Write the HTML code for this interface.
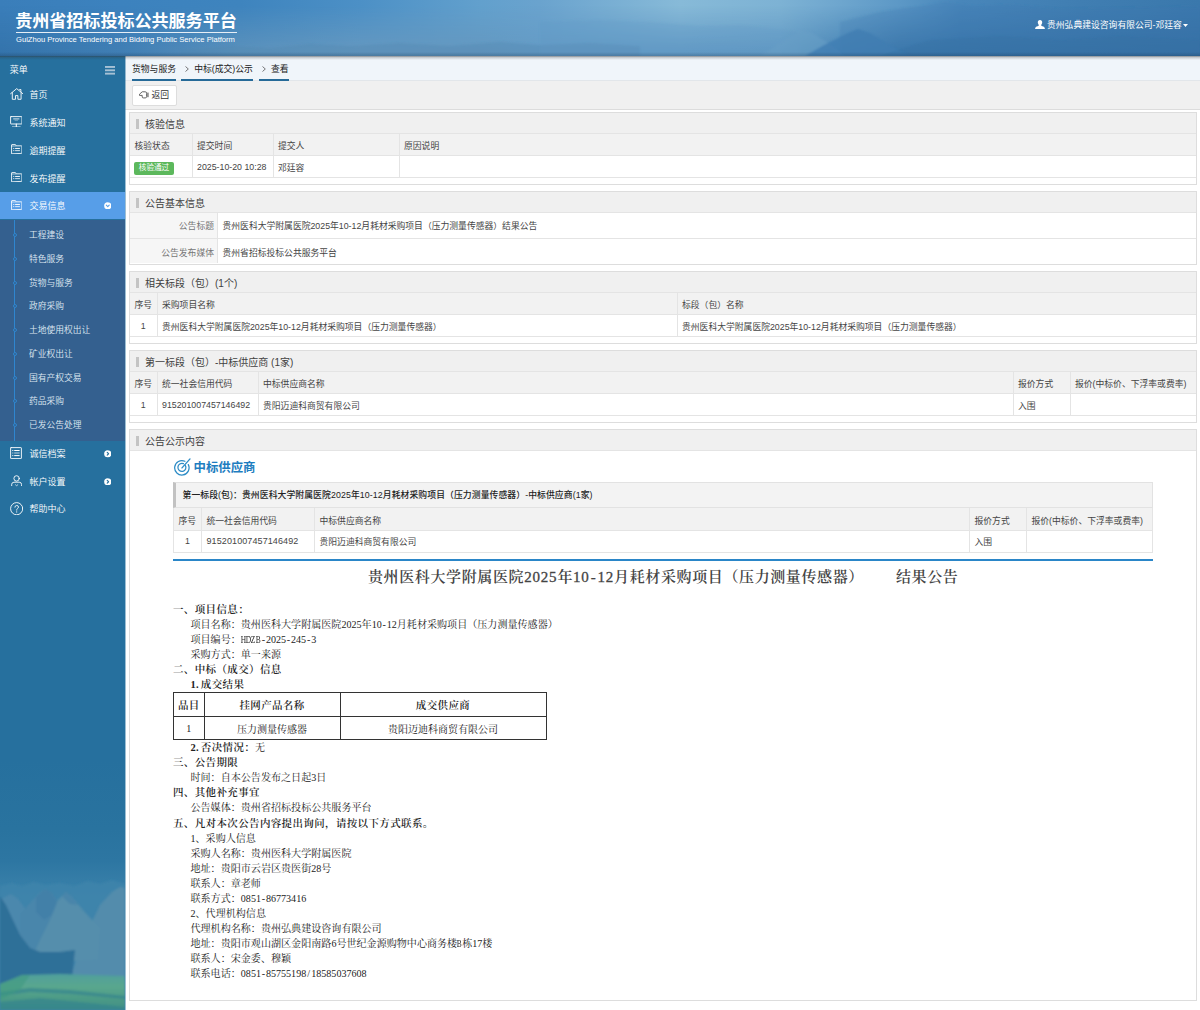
<!DOCTYPE html>
<html lang="zh-CN">
<head>
<meta charset="utf-8">
<title>贵州省招标投标公共服务平台</title>
<style>
*{box-sizing:border-box;margin:0;padding:0}
html,body{width:1200px;height:1010px;overflow:hidden;background:#fff}
body{font-family:"Liberation Sans","Noto Sans CJK SC",sans-serif;font-size:9px;color:#333;position:relative}
.abs{position:absolute}
/* header */
#hdr{position:absolute;left:0;top:0;width:1200px;height:56px;overflow:hidden;background:#4585bb}
#hdr svg.bg{position:absolute;left:0;top:0}
#hdr .t1{position:absolute;left:15.2px;top:10px;font-size:17.1px;font-weight:bold;color:#fff;letter-spacing:-0.05px;white-space:nowrap;line-height:24px}
#hdr .ul{position:absolute;left:15.5px;top:32px;width:221px;height:1px;background:#e6eef6}
#hdr .t2{position:absolute;left:16px;top:34.5px;font-size:7.6px;color:#fff;white-space:nowrap;line-height:10px}
#hdr .user{position:absolute;left:1047px;top:19px;font-size:8.8px;color:#fff;white-space:nowrap;line-height:12px}
#hshadow{position:absolute;left:0;top:56px;width:1200px;height:4px;background:linear-gradient(180deg,rgba(50,55,60,.55),rgba(50,55,60,.2) 40%,rgba(50,55,60,0));z-index:5}
#sedge{position:absolute;left:125px;top:56px;width:1px;height:954px;background:rgba(38,112,158,.45);z-index:4}
/* sidebar */
#side{position:absolute;left:0;top:56px;width:125px;height:954px;background:#26709e;overflow:hidden;color:#fff}
#side .bgimg{position:absolute;left:0;top:0}
#side .row{position:absolute;left:0;width:125px;height:27.5px;line-height:27.5px;font-size:9px;white-space:nowrap}
#side .row span.tx{position:absolute;left:29.5px}
#side .row svg{position:absolute;left:9px;top:7px}
#side .sub{position:absolute;left:0;top:163px;width:125px;height:221px;background:#34608f}
#side .sub .ln{position:absolute;left:14px;top:0;width:1px;height:221px;background:#2f86cf}
#side .sub .it{position:absolute;left:29px;font-weight:350;font-size:8.75px;line-height:12px;color:#dfe8f2;white-space:nowrap}
#side .sub .dot{position:absolute;left:12.5px;width:4px;height:4px;border:1px solid #2f86cf;border-radius:50%;background:#34608f}
/* main */
#main{position:absolute;left:125px;top:56px;width:1075px;height:954px;background:#fff}
#crumb{position:absolute;left:0;top:0;width:1075px;height:25px;background:#f0f5fa;border-bottom:1px solid #e2e6ea}
#crumb .c{position:absolute;top:2px;height:23px;line-height:22px;font-size:8.8px;color:#222;border-bottom:2px solid #266a98;white-space:nowrap;padding:0}
#crumb .s{position:absolute;top:1px;line-height:22px;font-size:9px;color:#333}
#tool{position:absolute;left:0;top:25px;width:1075px;height:29px;background:#f0f0f0;border-bottom:1px solid #dcdcdc}
#tool .btn{position:absolute;left:7px;top:4px;width:44.5px;height:20.5px;background:#fff;border:1px solid #ddd;border-radius:2px;font-size:8.8px;line-height:18.5px;color:#333}
.panel{position:absolute;left:4px;width:1068px;border:1px solid #ddd;background:#fff}
.panel .hd{height:21px;background:#f0f0f0;border-bottom:1px solid #e4e4e4;position:relative;font-size:10px;line-height:23px;color:#404040;padding-left:15px;overflow:hidden}
.panel .hd:before{content:"";position:absolute;left:6px;top:5.5px;width:3px;height:10px;background:#c4c4c4}
table{border-collapse:collapse;table-layout:fixed}
.tb{width:100%;font-size:9px}
.tb th{background:#f2f2f2;font-weight:normal;text-align:left;color:#444;height:21px;padding:2px 4.5px 0;border:1px solid #e4e4e4;white-space:nowrap}
.tb td{height:22px;padding:2px 4.5px 0;border:1px solid #e4e4e4;white-space:nowrap;color:#444}
.tb tr>*:first-child{border-left:none}
.tb tr>*:last-child{border-right:none}
.tb tr:first-child>*{border-top:none}

#crumb .c svg.gt{position:absolute;top:7.7px}
.tb{font-size:8.8px}
.tb td.ct{text-align:center;padding:2px 0 0}
.tb.kv th{text-align:right;background:#f6f6f6;color:#777;height:25px;padding:1px 2.5px 0 0}
.tb.kv td{height:25px;padding:1px 5px 0}
.tb.kv tr:last-child th{padding-top:3px}.tb.kv tr:last-child td{padding-top:3px}
.tb.kv tr:last-child>*{border-bottom:none}
.badge{display:inline-block;background:#5cb85c;color:#fff;font-size:7.6px;line-height:12.5px;height:12.5px;width:40px;text-align:center;border-radius:2px;vertical-align:middle;position:relative;top:1.5px;left:-0.5px}

#side svg.ic{position:absolute}
#side .act{position:absolute;left:0;width:125px;height:27.7px;background:#579ee8}
#side .row{height:27.75px;line-height:27.75px;font-weight:350}
#side .sub{top:163.5px;height:221px}

#p5 .h2{position:absolute;font-size:12.4px;font-weight:bold;color:#1e7dc0;line-height:18px;white-space:nowrap}
#p5 .sh{position:absolute;height:26px;line-height:24px;background:#f3f3f3;border:1px solid #e2e2e2;border-left:3px solid #c2c2c2;padding-left:6.5px;font-size:8.8px;color:#222;font-weight:500;white-space:nowrap;letter-spacing:0.1px}
#p5 .t2{font-family:"Liberation Sans","Noto Sans CJK SC",sans-serif}
#p5 .t2 th{height:22px;padding-top:3px}#p5 .t2 td{height:22px;padding-top:0}
#p5 .t2 tr>*:first-child{border-left:1px solid #e4e4e4}
#p5 .t2 tr>*:last-child{border-right:1px solid #e4e4e4}
#p5 .t2 .dg{letter-spacing:0.1px;font-size:9px}
#p5 .bl{position:absolute;height:2px;background:#2a86c8}
.ann{position:absolute;left:-1px;top:0;font-family:"Liberation Serif","Noto Serif CJK SC",serif;color:#222;font-weight:400}
.ann .ttl{position:absolute;font-size:15px;font-weight:600;letter-spacing:0.62px;white-space:nowrap;line-height:22px;color:#444}
.ann .l{position:absolute;left:44px;font-size:10.07px;line-height:15px;white-space:nowrap}
.ann .l.i{left:61.5px}
.ann .l.b,.ann .l b{font-size:10.5px;font-weight:600;color:#222;letter-spacing:0.36px}
.ann .m{font-family:"Liberation Serif",serif;font-size:10.07px}
.ann .m i{font-style:normal;display:inline-block;width:5.03px;text-align:center}
.ann .m i.c{transform:scaleX(.74);transform-origin:50% 50%;text-indent:-1.1px}
.ann .rt{position:absolute;border-collapse:collapse;table-layout:fixed;width:372.5px}
.ann .rt th,.ann .rt td{border:1px solid #333;height:23.7px;text-align:center;font-size:10px;padding:0;color:#222;font-weight:400}
.ann .rt th{font-size:10.5px;font-weight:600;color:#222;letter-spacing:0.36px}
.ann .ttl .n{font-weight:normal;-webkit-text-stroke:0.3px #444;letter-spacing:0.8px}
.ann .ttl .hy{font-style:normal;display:inline-block;width:7.8px;text-align:center}
</style>
</head>
<body>
<div id="hdr">
  <svg class="bg" width="1200" height="56" viewBox="0 0 1200 56" preserveAspectRatio="none">
    <defs>
      <linearGradient id="hg" x1="0" y1="0" x2="1" y2="0"><stop offset="0.0000" stop-color="#3a7eba"/><stop offset="0.1000" stop-color="#3c82be"/><stop offset="0.2000" stop-color="#3e84be"/><stop offset="0.3000" stop-color="#4c90c6"/><stop offset="0.4000" stop-color="#62a0cd"/><stop offset="0.4500" stop-color="#6aa3ce"/><stop offset="0.5667" stop-color="#87bad8"/><stop offset="0.6500" stop-color="#7db2d4"/><stop offset="0.7000" stop-color="#6ea6ce"/><stop offset="0.7500" stop-color="#5c98c6"/><stop offset="0.8000" stop-color="#4886ba"/><stop offset="0.9000" stop-color="#407eb2"/><stop offset="1.0000" stop-color="#3a78ac"/></linearGradient>
      <linearGradient id="hb" x1="0" y1="0" x2="1" y2="0"><stop offset="0.0000" stop-color="#3474ac"/><stop offset="0.1000" stop-color="#407eb4"/><stop offset="0.2000" stop-color="#5a91bc"/><stop offset="0.3000" stop-color="#6498c0"/><stop offset="0.4000" stop-color="#6498c0"/><stop offset="0.4500" stop-color="#649bc5"/><stop offset="0.5667" stop-color="#649bc5"/><stop offset="0.6500" stop-color="#6299c3"/><stop offset="0.7000" stop-color="#4b87b6"/><stop offset="0.7500" stop-color="#3c78aa"/><stop offset="0.8000" stop-color="#3874a8"/><stop offset="1.0000" stop-color="#346ea2"/></linearGradient>
      <linearGradient id="vm" x1="0" y1="0" x2="0" y2="1"><stop offset="0.1" stop-color="#000"/><stop offset="0.9" stop-color="#fff"/></linearGradient>
      <mask id="mk"><rect width="1200" height="56" fill="url(#vm)"/></mask>
      <filter id="bl" x="-5%" y="-30%" width="110%" height="160%"><feGaussianBlur stdDeviation="1.2"/></filter>
    </defs>
    <rect width="1200" height="56" fill="url(#hg)"/>
    <rect width="1200" height="56" fill="url(#hb)" mask="url(#mk)"/>
    <g filter="url(#bl)">
      <path d="M180 50 L230 46 L270 48 L310 44 L350 46 L400 43 L450 46 L500 42 L540 45 L590 43 L640 46 L640 56 L180 56 Z" fill="#4f86b0" fill-opacity=".35"/>
      <path d="M540 22 L600 20 L650 22 L700 26 L740 25 L780 29 L800 33 L800 56 L540 56 Z" fill="#5f97c2" fill-opacity=".22"/>
      <path d="M840 22 L880 12 L920 6 L945 2 L975 6 L1010 4 L1060 9 L1200 6 L1200 56 L840 56 Z" fill="#3b78ae" fill-opacity=".25"/>
      <path d="M760 56 L785 40 L800 30 L812 33 L830 44 L845 56 Z" fill="#6a9fc7" fill-opacity=".5"/>
      <path d="M805 56 L826 44 L846 34 L858 29 L870 33 L888 44 L910 56 Z" fill="#3e7db3" fill-opacity=".8"/>
      <path d="M880 56 L930 40 L1000 36 L1060 40 L1120 36 L1200 40 L1200 56 Z" fill="#336fa4" fill-opacity=".35"/>
    </g>
  </svg>
  <div style="position:absolute;left:0;top:52px;width:1200px;height:4px;background:linear-gradient(180deg,rgba(20,50,80,0),rgba(20,50,80,.28))"></div>
  <div class="t1">贵州省招标投标公共服务平台</div>
  <div class="ul"></div>
  <div class="t2">GuiZhou Province Tendering and Bidding Public Service Platform</div>
  <svg style="position:absolute;left:1034.5px;top:20px" width="10" height="9.4" viewBox="0 0 10 9.4"><path d="M5 0 C6.6 0 7.3 1.2 7.2 2.6 C7.1 3.9 6.5 4.6 6.2 5 C6.2 5.6 6.4 5.9 7.4 6.3 C8.8 6.8 9.8 7.2 10 9.4 L0 9.4 C0.2 7.2 1.2 6.8 2.6 6.3 C3.6 5.9 3.8 5.6 3.8 5 C3.5 4.6 2.9 3.9 2.8 2.6 C2.7 1.2 3.4 0 5 0 Z" fill="#fff"/></svg>
  <div class="user">贵州弘典建设咨询有限公司-邓廷容</div>
  <svg style="position:absolute;left:1183px;top:24px" width="5" height="3" viewBox="0 0 5 3"><path d="M0 0 H5 L2.5 3 Z" fill="#fff"/></svg>
</div>
<div id="side">
  <svg class="bgimg" width="125" height="954" viewBox="0 56 125 954">
    <defs>
      <linearGradient id="sg" x1="0" y1="0" x2="0" y2="1" gradientUnits="objectBoundingBox">
        <stop offset="0" stop-color="#26709e"/><stop offset="0.5" stop-color="#29739f"/><stop offset="0.72" stop-color="#2d76a2"/><stop offset="0.86" stop-color="#357da7"/><stop offset="1" stop-color="#3c83ab"/>
      </linearGradient>
      <linearGradient id="fg" x1="0" y1="0" x2="0" y2="1"><stop offset="0" stop-color="#4f9f9c"/><stop offset="0.35" stop-color="#5aa78e"/><stop offset="0.7" stop-color="#4c9a86"/><stop offset="1" stop-color="#3f8f86"/></linearGradient>
      <filter id="sb" x="-10%" y="-10%" width="120%" height="120%"><feGaussianBlur stdDeviation="0.9"/></filter>
    </defs>
    <rect x="0" y="760" width="125" height="140" fill="url(#sg)"/>
    <rect x="0" y="899" width="125" height="111" fill="#3c83ab"/>
    <g filter="url(#sb)">
      <path d="M0 886 L12 883 L22 886 L34 882 L46 885 L60 883 L74 886 L88 881 L100 884 L112 880 L125 884 L125 930 L0 930 Z" fill="#3e84ab" fill-opacity=".8"/>
      <path d="M100 905 L112 892 L120 887 L125 888 L125 980 L70 980 L76 960 L88 930 Z" fill="#528cac"/>
      <path d="M0 900 L5 897 L11 894 L18 899 L24 907 L30 915 L30 960 L0 960 Z" fill="#4b88ad"/>
      <path d="M20 915 L30 903 L38 894 L45 889 L52 893 L58 902 L64 912 L70 925 L70 960 L20 960 Z" fill="#4a86ab"/>
      <path d="M36 897 L45 889 L52 893 L58 903 L52 915 L44 920 L36 912 Z" fill="#3f7da6" fill-opacity=".6"/>
      <path d="M58 900 L66 892 L72 897 L82 909 L92 920 L100 928 L98 960 L30 962 L40 940 L50 920 Z" fill="#558eac"/>
      <path d="M62 896 L66 892 L72 897 L78 905 L70 904 Z" fill="#4482aa" fill-opacity=".7"/>
      <path d="M0 896 L6 905 L12 918 L20 935 L30 948 L40 952 L60 952 L75 950 L72 978 L0 985 Z" fill="#2f6f98"/>
      <path d="M0 984 L10 980 L22 975 L60 974 L125 976 L125 1010 L0 1010 Z" fill="url(#fg)"/>
      <path d="M0 992 L30 988 L70 990 L125 996 L125 999 L70 994 L30 992 L0 996 Z" fill="#2f7f8f" fill-opacity=".6"/>
      <path d="M0 1002 L40 998 L90 1003 L125 1007 L125 1010 L0 1010 Z" fill="#2f7f8f" fill-opacity=".55"/>
      <path d="M0 984 L10 980 L22 975 L30 975 L20 990 L0 1000 Z" fill="#3f9a80" fill-opacity=".6"/>
    </g>
  </svg>
  <div class="row" style="top:1px"><span class="tx" style="left:9.7px">菜单</span></div>
  <svg class="ic" style="left:105px;top:10.2px" width="10" height="8.6" viewBox="0 0 10 8.6"><rect x="0" y="0" width="10" height="1.9" fill="#a6c1d5"/><rect x="0" y="3.35" width="10" height="1.9" fill="#a6c1d5"/><rect x="0" y="6.7" width="10" height="1.9" fill="#a6c1d5"/></svg>
  <div class="act" style="top:135.8px"></div>
  <div class="sub">
    <div class="ln"></div>
    <div class="it" style="top:9.50px">工程建设</div><div class="dot" style="top:13.50px"></div>
    <div class="it" style="top:33.25px">特色服务</div><div class="dot" style="top:37.25px"></div>
    <div class="it" style="top:57.00px">货物与服务</div><div class="dot" style="top:61.00px"></div>
    <div class="it" style="top:80.75px">政府采购</div><div class="dot" style="top:84.75px"></div>
    <div class="it" style="top:104.50px">土地使用权出让</div><div class="dot" style="top:108.50px"></div>
    <div class="it" style="top:128.25px">矿业权出让</div><div class="dot" style="top:132.25px"></div>
    <div class="it" style="top:152.00px">国有产权交易</div><div class="dot" style="top:156.00px"></div>
    <div class="it" style="top:175.75px">药品采购</div><div class="dot" style="top:179.75px"></div>
    <div class="it" style="top:199.50px">已发公告处理</div><div class="dot" style="top:203.50px"></div>
  </div>
  <div class="row" style="top:26px;"><span class="tx">首页</span></div>
  <svg class="ic" style="left:9.8px;top:32.2px" width="13.4" height="12" viewBox="0 0 13.4 12"><g stroke="#fff" fill="none" stroke-width="0.9" stroke-linejoin="round" stroke-linecap="round"><path d="M0.6 5.7 L6.7 0.6 L12.8 5.7"/><path d="M2.3 4.6 V11.3 H5.5 V7.6 H7.9 V11.3 H11.1 V4.6"/><path d="M9.7 1.5 H10.9 V3.6"/></g></svg>
  
  <div class="row" style="top:54px;"><span class="tx">系统通知</span></div>
  <svg class="ic" style="left:9.7px;top:59.599999999999994px" width="12.6" height="11.8" viewBox="0 0 12.6 11.8"><g stroke="#fff" fill="none" stroke-width="0.9" stroke-linejoin="round" stroke-linecap="round"><rect x="0.6" y="0.6" width="11.4" height="7.4" rx="0.4"/><path d="M3.6 2.9 H9" stroke-width="0.8"/><path d="M5 4.3 H7.6" stroke-width="0.6" stroke-opacity=".6"/><path d="M6.3 8 V10.6" stroke-width="1.1"/><path d="M2.4 10.9 H10.2" stroke-opacity=".8"/></g></svg>
  
  <div class="row" style="top:82px;"><span class="tx">逾期提醒</span></div>
  <svg class="ic" style="left:10.7px;top:88.2px" width="11.5" height="10" viewBox="0 0 12 10.4"><g stroke="#fff" fill="none" stroke-width="0.9" stroke-linejoin="round" stroke-linecap="round"><path d="M0.6 9.8 V1 Q0.6 0.6 1 0.6 H4.6 L5.3 1.9 H11 Q11.4 1.9 11.4 2.3 V9.4 Q11.4 9.8 11 9.8 Z"/><path d="M0.6 2.1 H5" stroke-opacity=".7"/></g><rect x="2.4" y="4.1" width="1" height="1" fill="#fff"/><rect x="2.4" y="6.4" width="1" height="1" fill="#fff"/><rect x="4.3" y="4.1" width="5" height="1" fill="#fff"/><rect x="4.3" y="6.4" width="5" height="1" fill="#fff" fill-opacity=".8"/></svg>
  
  <div class="row" style="top:110px;"><span class="tx">发布提醒</span></div>
  <svg class="ic" style="left:10.7px;top:116px" width="11.5" height="10" viewBox="0 0 12 10.4"><g stroke="#fff" fill="none" stroke-width="0.9" stroke-linejoin="round" stroke-linecap="round"><path d="M0.6 9.8 V1 Q0.6 0.6 1 0.6 H4.6 L5.3 1.9 H11 Q11.4 1.9 11.4 2.3 V9.4 Q11.4 9.8 11 9.8 Z"/><path d="M0.6 2.1 H5" stroke-opacity=".7"/></g><rect x="2.4" y="4.1" width="1" height="1" fill="#fff"/><rect x="2.4" y="6.4" width="1" height="1" fill="#fff"/><rect x="4.3" y="4.1" width="5" height="1" fill="#fff"/><rect x="4.3" y="6.4" width="5" height="1" fill="#fff" fill-opacity=".8"/></svg>
  
  <div class="row" style="top:137px;"><span class="tx">交易信息</span></div>
  <svg class="ic" style="left:10.7px;top:143.7px" width="11.5" height="10" viewBox="0 0 12 10.4"><g stroke="#fff" fill="none" stroke-width="0.9" stroke-linejoin="round" stroke-linecap="round"><path d="M0.6 9.8 V1 Q0.6 0.6 1 0.6 H4.6 L5.3 1.9 H11 Q11.4 1.9 11.4 2.3 V9.4 Q11.4 9.8 11 9.8 Z"/><path d="M0.6 2.1 H5" stroke-opacity=".7"/></g><rect x="2.4" y="4.1" width="1" height="1" fill="#fff"/><rect x="2.4" y="6.4" width="1" height="1" fill="#fff"/><rect x="4.3" y="4.1" width="5" height="1" fill="#fff"/><rect x="4.3" y="6.4" width="5" height="1" fill="#fff" fill-opacity=".8"/></svg>
  <svg class="ic" style="left:103.6px;top:145.85px" width="7.5" height="7.5" viewBox="0 0 7.5 7.5"><circle cx="3.75" cy="3.75" r="3.6" fill="#fff"/><path d="M2.3 3.2 L3.75 4.6 L5.2 3.2" fill="none" stroke="#579ee8" stroke-width="1.1" stroke-linecap="round" stroke-linejoin="round"/></svg>
  <div class="row" style="top:385px;"><span class="tx">诚信档案</span></div>
  <svg class="ic" style="left:10.3px;top:390.8px" width="12" height="12.2" viewBox="0 0 12 12.2"><g stroke="#fff" fill="none" stroke-width="0.9" stroke-linejoin="round" stroke-linecap="round"><rect x="0.6" y="0.6" width="10.8" height="11" rx="0.5"/></g><g fill="#fff"><rect x="2.3" y="3" width="1" height="1"/><rect x="2.3" y="5.5" width="1" height="1" fill-opacity=".8"/><rect x="2.3" y="8.1" width="1" height="1"/><rect x="4.2" y="3" width="5.4" height="1"/><rect x="4.2" y="5.5" width="5.4" height="1" fill-opacity=".7"/><rect x="4.2" y="8.1" width="5.4" height="1"/></g></svg>
  <svg class="ic" style="left:103.6px;top:394.15px" width="7.5" height="7.5" viewBox="0 0 7.5 7.5"><circle cx="3.75" cy="3.75" r="3.6" fill="#fff"/><path d="M3.2 2.3 L4.6 3.75 L3.2 5.2" fill="none" stroke="#26709e" stroke-width="1.1" stroke-linecap="round" stroke-linejoin="round"/></svg>
  <div class="row" style="top:413px;"><span class="tx">帐户设置</span></div>
  <svg class="ic" style="left:10.6px;top:418.6px" width="11.4" height="12" viewBox="0 0 11.4 12"><g stroke="#fff" fill="none" stroke-width="0.9" stroke-linejoin="round" stroke-linecap="round"><circle cx="5.6" cy="3.4" r="2.7"/><path d="M0.7 10.6 V9.3 Q0.7 7.4 3 7.2 H8.2 Q10.6 7.4 10.6 9.3 V10.6"/><path d="M4.5 9.8 L5.6 10.7 L6.8 9.8" stroke-width="0.7"/></g></svg>
  <svg class="ic" style="left:103.6px;top:421.65px" width="7.5" height="7.5" viewBox="0 0 7.5 7.5"><circle cx="3.75" cy="3.75" r="3.6" fill="#fff"/><path d="M3.2 2.3 L4.6 3.75 L3.2 5.2" fill="none" stroke="#26709e" stroke-width="1.1" stroke-linecap="round" stroke-linejoin="round"/></svg>
  <div class="row" style="top:440px;"><span class="tx">帮助中心</span></div>
  <svg class="ic" style="left:9.6px;top:445.6px" width="13.4" height="13.4" viewBox="0 0 13.4 13.4"><g stroke="#fff" fill="none" stroke-width="0.9" stroke-linejoin="round" stroke-linecap="round"><circle cx="6.7" cy="6.7" r="6.1"/><path d="M4.9 5.2 Q4.9 3.5 6.7 3.5 Q8.5 3.5 8.5 5 Q8.5 6 7.4 6.6 Q6.7 7 6.7 8.2" stroke-width="0.85"/></g><circle cx="6.7" cy="9.9" r="0.55" fill="#fff"/></svg>
  
</div>
<div id="main">
  <div id="crumb">
    <span class="c" style="left:7px">货物与服务</span>
    <span class="c" style="left:56px;padding-left:13.2px"><svg class="gt" width="4" height="6" viewBox="0 0 4 6" style="left:3.8px"><path d="M0.5 0.5 L3.3 3 L0.5 5.5" fill="none" stroke="#555" stroke-width="0.8"/></svg>中标(成交)公示</span>
    <span class="c" style="left:133.5px;padding-left:12.5px"><svg class="gt" width="4" height="6" viewBox="0 0 4 6" style="left:3.4px"><path d="M0.5 0.5 L3.3 3 L0.5 5.5" fill="none" stroke="#555" stroke-width="0.8"/></svg>查看</span>
  </div>
  <div id="tool"><div class="btn"><svg class="ico" width="10" height="8" viewBox="0 0 10 8" style="position:absolute;left:6.3px;top:4.8px"><path d="M0.5 3.2 L3.2 0.8 L6.3 0.8 Q7.6 0.8 7.6 2.2 L7.6 5.6 Q7.6 6.9 6.3 6.9 L4.2 6.9 Q3.3 6.9 3.2 6 L3.2 4.4 L0.5 4.4 Z" fill="none" stroke="#555" stroke-width="0.9"/><rect x="8.4" y="1.6" width="1.1" height="4.6" fill="#555"/></svg><span style="position:absolute;left:18.5px">返回</span></div></div>

  <div class="panel" style="top:56px;height:73px">
    <div class="hd">核验信息</div>
    <table class="tb"><colgroup><col style="width:62px"><col style="width:81px"><col style="width:126px"><col></colgroup>
      <tr><th>核验状态</th><th>提交时间</th><th>提交人</th><th>原因说明</th></tr>
      <tr><td><span class="badge">核验通过</span></td><td>2025-10-20 10:28</td><td>邓廷容</td><td></td></tr>
    </table>
  </div>

  <div class="panel" style="top:135px;height:74px">
    <div class="hd">公告基本信息</div>
    <table class="tb kv"><colgroup><col style="width:87px"><col></colgroup>
      <tr><th>公告标题</th><td>贵州医科大学附属医院2025年10-12月耗材采购项目（压力测量传感器）结果公告</td></tr>
      <tr><th>公告发布媒体</th><td>贵州省招标投标公共服务平台</td></tr>
    </table>
  </div>

  <div class="panel" style="top:215px;height:73px">
    <div class="hd">相关标段（包）(1个)</div>
    <table class="tb"><colgroup><col style="width:27px"><col style="width:520px"><col></colgroup>
      <tr><th>序号</th><th>采购项目名称</th><th>标段（包）名称</th></tr>
      <tr><td class="ct">1</td><td>贵州医科大学附属医院2025年10-12月耗材采购项目（压力测量传感器）</td><td>贵州医科大学附属医院2025年10-12月耗材采购项目（压力测量传感器）</td></tr>
    </table>
  </div>

  <div class="panel" style="top:294px;height:73px">
    <div class="hd">第一标段（包）-中标供应商 (1家)</div>
    <table class="tb"><colgroup><col style="width:27px"><col style="width:101px"><col><col style="width:57px"><col style="width:126px"></colgroup>
      <tr><th>序号</th><th>统一社会信用代码</th><th>中标供应商名称</th><th>报价方式</th><th>报价(中标价、下浮率或费率)</th></tr>
      <tr><td class="ct">1</td><td>915201007457146492</td><td>贵阳迈迪科商贸有限公司</td><td>入围</td><td></td></tr>
    </table>
  </div>

  <div class="panel" id="p5" style="top:373px;height:572px">
    <div class="hd">公告公示内容</div>
    <svg style="position:absolute;left:43.7px;top:27.7px" width="17" height="18" viewBox="0 0 17 18"><g fill="none" stroke="#2d8cc6" stroke-width="1.25" stroke-linecap="round"><path d="M14.3 6.6 A7.2 7.2 0 1 1 10.9 3.3"/><path d="M11.3 7.3 A4 4 0 1 1 9.4 5.7"/><path d="M8 9.9 L16 0.9" stroke-width="1.35"/></g></svg>
    <div class="h2" style="left:63.5px;top:28.5px">中标供应商</div>
    <div class="sh" style="left:43px;top:52px;width:980px">第一标段(包)：贵州医科大学附属医院2025年10-12月耗材采购项目（压力测量传感器）-中标供应商(1家)</div>
    <table class="tb t2" style="position:absolute;left:43px;top:78px;width:980px"><colgroup><col style="width:28px"><col style="width:113px"><col><col style="width:57px"><col style="width:126px"></colgroup>
      <tr><th>序号</th><th>统一社会信用代码</th><th>中标供应商名称</th><th>报价方式</th><th>报价(中标价、下浮率或费率)</th></tr>
      <tr><td class="ct">1</td><td><span class="dg">915201007457146492</span></td><td>贵阳迈迪科商贸有限公司</td><td>入围</td><td></td></tr>
    </table>
    <div class="bl" style="left:43px;top:129px;width:980px"></div>
    <div class="ann">
      <div class="ttl" style="left:239px;top:136px">贵州医科大学附属医院<span class="n">2025</span>年<span class="n">10<i class="hy">-</i>12</span>月耗材采购项目（压力测量传感器）<span style="display:inline-block;width:32px"></span>结果公告</div>
      <div class="l b" style="top:172px">一、项目信息：</div>
      <div class="l i" style="top:187px">项目名称：贵州医科大学附属医院<span class="m">2025</span>年<span class="m">10<i class="h">-</i>12</span>月耗材采购项目（压力测量传感器）</div>
      <div class="l i" style="top:202px">项目编号：<span class="m"><i class="c">H</i><i class="c">D</i><i class="c">Z</i><i class="c">B</i><i class="h">-</i>2025<i class="h">-</i>245<i class="h">-</i>3</span></div>
      <div class="l i" style="top:217px">采购方式：单一来源</div>
      <div class="l b" style="top:232px">二、中标（成交）信息</div>
      <div class="l b i" style="top:247px"><span class="n" style="margin-right:1.7px">1.</span>成交结果</div>
      <table class="rt" style="left:44px;top:262px"><colgroup><col style="width:30.5px"><col style="width:136px"><col style="width:206px"></colgroup>
        <tr><th>品目</th><th>挂网产品名称</th><th>成交供应商</th></tr>
        <tr><td><span class="m">1</span></td><td>压力测量传感器</td><td>贵阳迈迪科商贸有限公司</td></tr>
      </table>
      <div class="l i" style="top:310px"><b><span class="n" style="margin-right:1.7px">2.</span>否决情况：</b>无</div>
      <div class="l b" style="top:325px">三、公告期限</div>
      <div class="l i" style="top:340px">时间：自本公告发布之日起<span class="m">3</span>日</div>
      <div class="l b" style="top:355px">四、其他补充事宜</div>
      <div class="l i" style="top:370px">公告媒体：贵州省招标投标公共服务平台</div>
      <div class="l b" style="top:386px">五、凡对本次公告内容提出询问，请按以下方式联系。</div>
      <div class="l i" style="top:401px"><span class="m">1</span>、采购人信息</div>
      <div class="l i" style="top:416px">采购人名称：贵州医科大学附属医院</div>
      <div class="l i" style="top:431px">地址：贵阳市云岩区贵医街<span class="m">28</span>号</div>
      <div class="l i" style="top:446px">联系人：章老师</div>
      <div class="l i" style="top:461px">联系方式：<span class="m">0851<i class="h">-</i>86773416</span></div>
      <div class="l i" style="top:476px"><span class="m">2</span>、代理机构信息</div>
      <div class="l i" style="top:491px">代理机构名称：贵州弘典建设咨询有限公司</div>
      <div class="l i" style="top:506px">地址：贵阳市观山湖区金阳南路<span class="m">6</span>号世纪金源购物中心商务楼<span class="m"><i class="c">B</i></span>栋<span class="m">17</span>楼</div>
      <div class="l i" style="top:521px">联系人：宋金委、穆颖</div>
      <div class="l i" style="top:536px">联系电话：<span class="m">0851<i class="h">-</i>85755198<i class="h">/</i>18585037608</span></div>
    </div>
  </div>
</div>
<div id="sedge"></div>
<div id="hshadow"></div>
</body>
</html>
